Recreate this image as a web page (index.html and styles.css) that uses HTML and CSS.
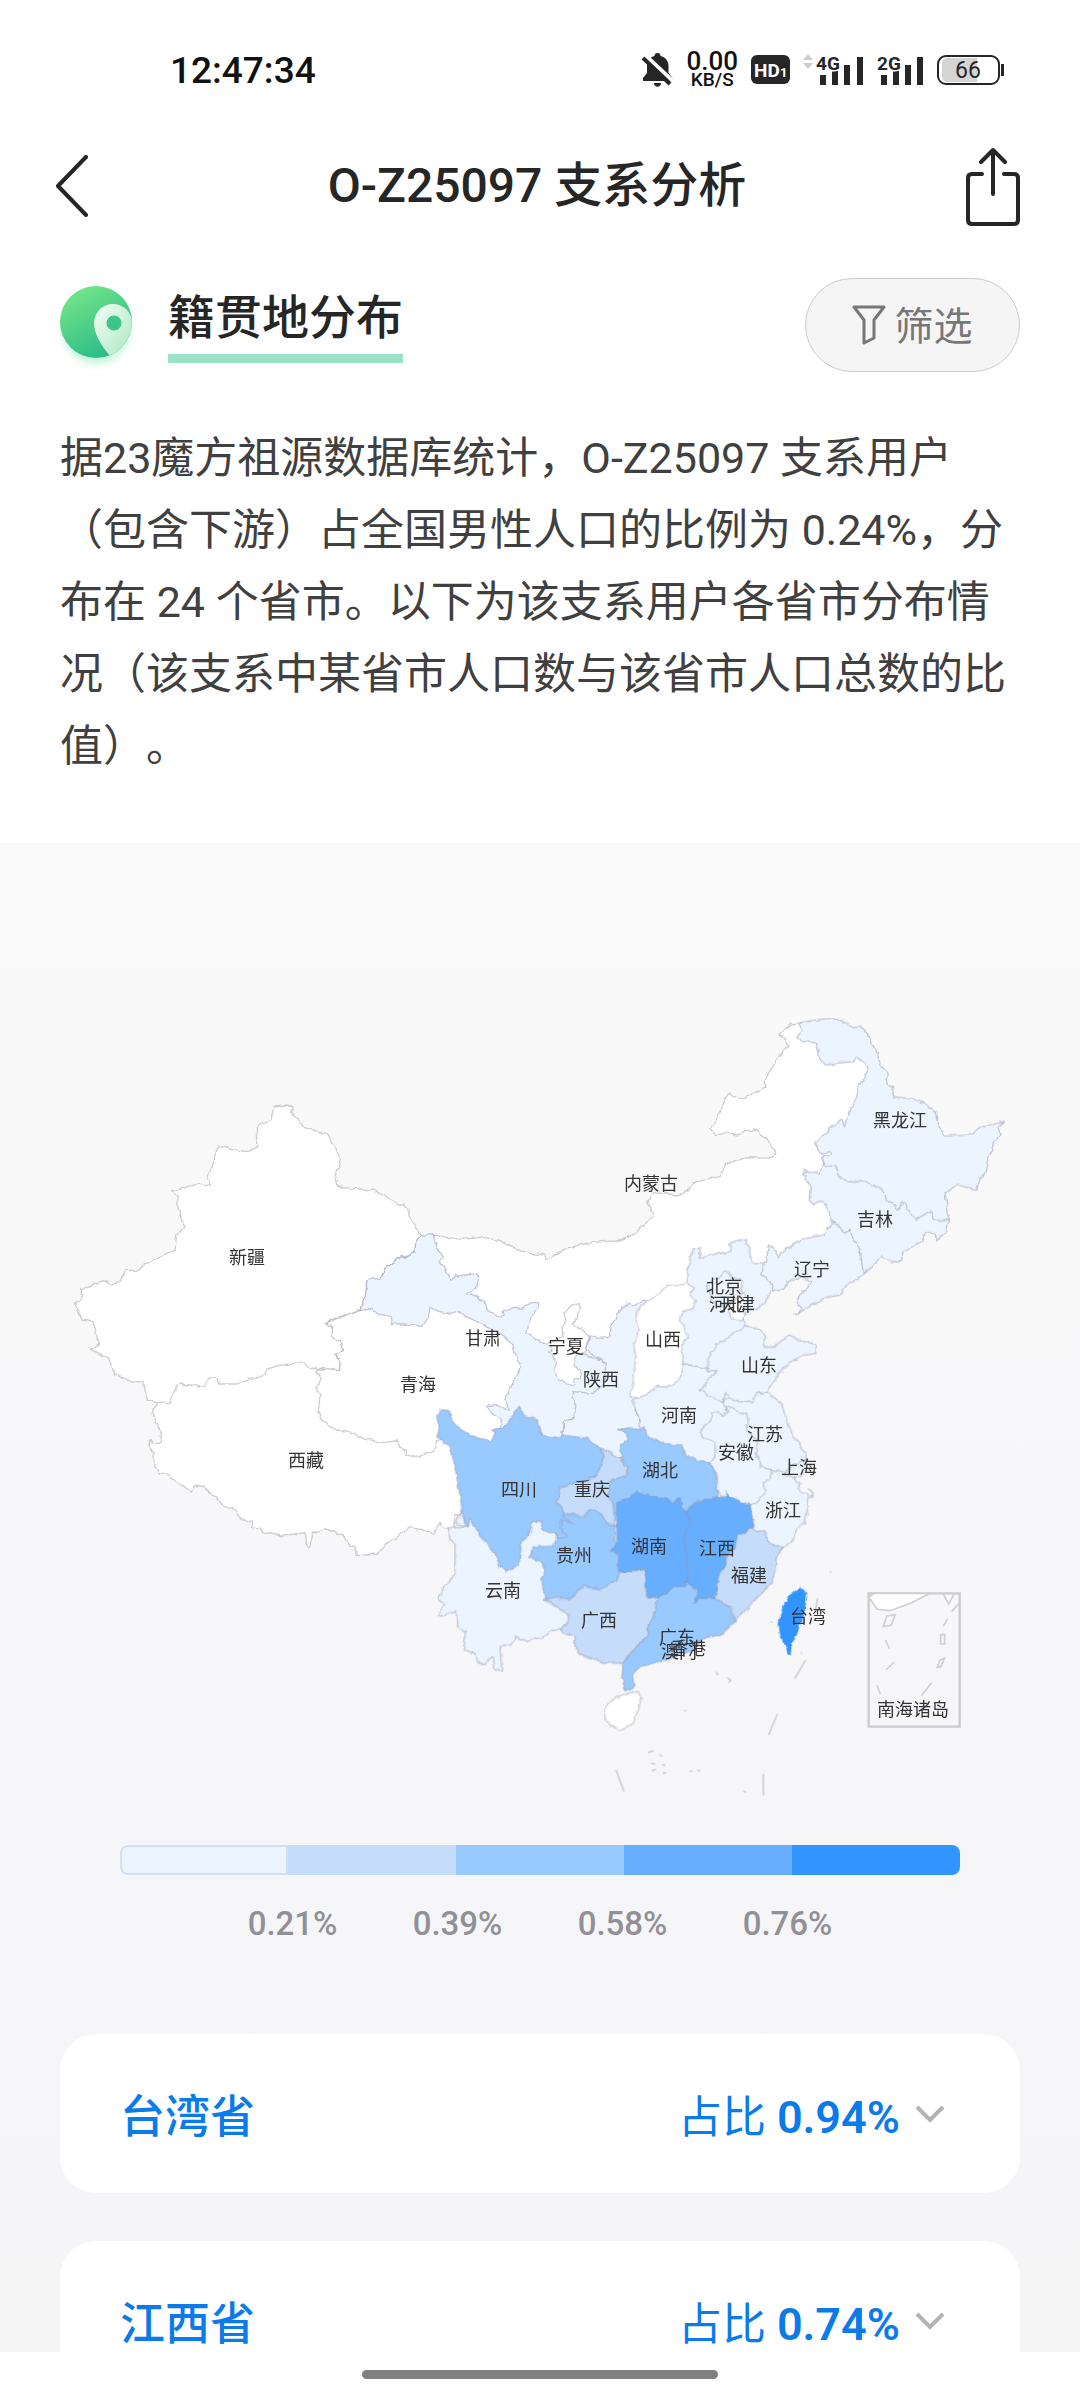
FILE: index.html
```html
<!DOCTYPE html>
<html lang="zh-CN">
<head>
<meta charset="utf-8">
<meta name="viewport" content="width=device-width, initial-scale=1">
<title>O-Z25097 支系分析</title>
<link rel="stylesheet" href="styles.css">
</head>
<body>
<div class="status">
  <time class="clock">12:47:34</time>
  <div class="status-icons">
    <svg class="bell" width="31" height="36" viewBox="0 0 31 36" aria-hidden="true">
      <path d="M15.500 1c2 0 3 1 3 3 5 1 8 5 8 10v7l4 5v3H1v-3l4-5v-7c0-5 3-9 7.500-10 0-2 1-3 3-3z"/><path d="M12 31h7c0 5-7 5-7 0z"/>
      <path class="bell-gap" d="M3 3l30 28"/><path class="bell-slash" d="M1 6l27 26"/>
    </svg>
    <div class="speed"><span class="rate">0.00</span><span class="unit">KB/S</span></div>
    <svg class="hd" width="39" height="30" viewBox="0 0 39 30"><rect width="39" height="29" rx="6"/><text x="3" y="22" class="hd-text">HD</text><text x="29" y="22" class="hd-sub">1</text></svg>
    <svg class="signal" width="61" height="34" viewBox="0 0 61 34"><path class="faint" d="M0 7l5-6 5 6zM0 10h10l-5 6z"/><path d="M17 22h6v10h-6zM29 18h6v14h-6zM41 12h6v20h-6zM54 4h6v28h-6z"/><text x="13" y="17" class="net">4G</text></svg>
    <svg class="signal" width="47" height="34" viewBox="0 0 47 34"><path d="M4 22h6v10H4zM16 18h6v14h-6zM28 12h6v20h-6zM40 4h6v28h-6z"/><text x="0" y="17" class="net">2G</text></svg>
    <svg class="battery" width="68" height="32" viewBox="0 0 68 32"><path class="level" d="M10 4h30v24H10a5 5 0 0 1-5-5V9a5 5 0 0 1 5-5z"/><rect class="shell" x="1" y="2" width="61" height="28" rx="8"/><path d="M64 10h3v12h-3z"/><text x="31" y="24" class="charge">66</text></svg>
  </div>
</div>
<header class="topbar">
  <button class="icon-btn" aria-label="返回"><svg width="36" height="62" viewBox="0 0 36 62"><path class="line" d="M32 2L4 31l28 29"/></svg></button>
  <h1>O-Z25097 支系分析</h1>
  <button class="icon-btn" aria-label="分享"><svg width="56" height="80" viewBox="0 0 56 80"><path class="line bold" d="M18 28H8q-4 0-4 4v42q0 4 4 4h42q4 0 4-4V32q0-4-4-4H40M29 48V5M17 16L29 4l12 12"/></svg></button>
</header>
<main>
  <section class="intro">
    <div class="section-head">
      <svg class="pin" width="84" height="90" viewBox="0 0 84 90" aria-hidden="true">
        <defs>
          <linearGradient id="green" x1="0.100" y1="0.100" x2="0.600" y2="1"><stop offset="0" stop-color="#74e588"/><stop offset="1" stop-color="#2abb88"/></linearGradient>
          <linearGradient id="pale" x1="0" y1="0" x2="1" y2="1"><stop offset="0" stop-color="#f4fcf5"/><stop offset="1" stop-color="#a9e8c0"/></linearGradient>
          <clipPath id="disc"><circle cx="42" cy="42" r="36"/></clipPath>
        </defs>
        <circle class="glow" cx="42" cy="51" r="32"/>
        <circle cx="42" cy="42" r="36" fill="url(#green)"/>
        <path clip-path="url(#disc)" fill="url(#pale)" d="M56 76C46 64 40 53 40 43a19 19 0 0 1 38 0c0 12-8 26-22 33z"/>
        <circle cx="60" cy="43" r="7.500" fill="#3cc489"/>
      </svg>
      <h2>籍贯地分布</h2>
      <button class="filter"><svg width="34" height="42" viewBox="0 0 34 42" aria-hidden="true"><path d="M2 3h30L22 16v18l-10 5V16z"/></svg><span>筛选</span></button>
    </div>
    <p>据23魔方祖源数据库统计，O-Z25097 支系用户（包含下游）占全国男性人口的比例为 0.24%，分布在 24 个省市。以下为该支系用户各省市分布情况（该支系中某省市人口数与该省市人口总数的比值）。</p>
  </section>
  <section class="panel">
    <svg class="map" viewBox="0 843 1080 972" role="img" aria-label="各省市分布地图">
      <defs>
        <filter id="coast" x="0" y="0" width="100%" height="100%" color-interpolation-filters="sRGB"><feTurbulence type="fractalNoise" baseFrequency="0.130" numOctaves="2" seed="4" result="n"/><feDisplacementMap in="SourceGraphic" in2="n" scale="5" xChannelSelector="R" yChannelSelector="G"/></filter>
      </defs>
      <g class="regions" filter="url(#coast)">
        <g transform="translate(300 1180) scale(.33333)">
          <path class="l0" d="M400 165L443 172 480 178 550 172 600 182 620 195 690 220 735 225 738 235 752 236 800 205 860 190 905 185 950 183 1000 165 1030 135 1065 108 1042 70 1055 38 1100 42 1145 45 1188 5 1260-10 1278-48 1340-70 1420-68 1428-85 1400-125 1365-150 1335-148 1312-132 1280-142 1248-133 1230-155 1245-172 1285-262 1330-243 1398-280 1395-300 1430-365 1465-400 1460-425 1433-432 1470-468 1508-472 1550-460 1600-380 1680-440 1720-330 1660-200 1600-80 1640 20 1620 160 1560 220 1420 310 1260 300 1150 420 1000 440 900 500 800 520 700 520 600 430 430 330 400 200z"/>
        </g>
        <g transform="translate(60 1080) scale(.33333)">
          <path class="l0" d="M295 970L278 990 285 1025 305 1060 300 1090 285 1090 268 1080 268 1100 282 1120 283 1150 298 1178 330 1185 340 1200 365 1212 392 1238 405 1215 430 1220 500 1285 520 1283 535 1308 565 1325 575 1322 578 1340 600 1345 612 1362 630 1355 670 1368 735 1355 742 1400 748 1405 760 1360 790 1345 850 1365 865 1395 885 1400 890 1427 950 1422 985 1390 1050 1343 1085 1348 1120 1365 1138 1330 1160 1345 1180 1345 1185 1305 1205 1300 1230 1250 1240 1150 1170 1060 1000 1000 850 900 700 820 500 850 350 900z"/>
        </g>
        <g transform="translate(300 1180) scale(.33333)">
          <path class="l0" d="M180 388L80 428 85 435 98 440 95 470 125 490 130 512 105 520 120 545 118 572 50 570 48 580 60 590 50 630 60 650 55 690 70 725 110 750 140 753 175 770 245 788 290 783 300 800 318 808 320 825 345 832 370 825 400 815 408 785 450 760 520 800 580 790 640 740 650 660 680 560 660 490 600 430 480 370 420 350 300 400 250 370z"/>
        </g>
        <g transform="translate(60 1080) scale(.33333)">
          <path class="l0" d="M645 80L695 78 700 85 692 98 735 140 765 152 800 160 818 190 842 235 835 265 825 290 830 315 870 325 940 330 970 345 1015 375 1035 375 1060 430 1082 465 1068 480 1065 515 1035 535 1025 530 975 565 963 595 925 600 915 650 900 688 825 715 798 728 815 740 818 770 845 790 850 810 825 825 840 845 838 872 790 862 770 868 720 848 650 858 620 868 605 890 570 895 530 912 480 912 465 895 450 893 430 918 390 915 355 912 345 930 330 968 295 970 262 960 250 908 200 900 160 880 155 845 130 825 88 808 118 795 100 725 65 720 55 690 43 672 62 660 65 630 105 610 138 600 148 613 180 608 195 572 240 570 255 552 345 508 350 465 365 450 373 440 355 390 353 350 335 335 420 310 455 320 440 295 475 198 520 210 565 215 593 200 592 135 635 118z"/>
        </g>
        <g transform="translate(300 1180) scale(.33333)">
          <path class="l1" d="M362 165L400 165 410 200 428 235 418 245 440 270 450 298 470 288 500 285 530 280 537 295 530 320 515 335 500 340 530 352 560 372 565 390 600 412 612 405 608 392 640 382 665 385 690 368 712 368 715 385 690 415 685 435 680 460 700 470 720 487 800 500 920 550 920 620 880 660 840 700 820 715 790 730 785 765 770 790 730 790 720 740 700 740 640 720 610 745 600 745 605 720 575 700 562 678 600 680 625 690 615 655 635 620 650 590 662 560 645 520 640 500 615 470 570 445 530 425 500 410 475 392 450 400 415 395 390 382 385 410 368 440 340 435 300 432 275 430 270 410 230 400 215 385 180 388 195 350 205 298 243 295 255 265 305 230 315 235 345 215 348 180z"/>
          <path class="l1" d="M1035 360L1000 375 985 370 965 385 930 440 925 472 895 475 870 465 855 510 915 548 918 600 880 640 820 635 815 650 828 675 820 718 790 722 790 790 900 850 1000 820 1040 760 1025 735 1005 690 1060 600 1080 450z"/>
          <path class="l0" d="M815 375L835 372 838 390 822 435 870 465 860 490 855 515 825 530 822 560 842 570 838 595 822 600 820 620 790 605 770 595 765 570 770 560 762 525 750 520 755 500 735 490 790 470 785 440 795 430 793 400z"/>
        </g>
        <g transform="translate(600 1220) scale(.33333)">
          <path class="l0" d="M280 180L265 185 235 200 200 195 170 230 145 240 120 260 105 300 118 330 100 370 108 410 100 480 90 530 150 540 280 480 300 350z"/>
          <path class="l1" d="M280 85L300 85 300 115 330 105 390 95 390 70 415 60 435 58 445 80 455 130 495 132 540 160 520 210 505 225 500 245 470 265 430 285 435 315 430 360 360 460 250 432 242 380 265 350 240 300 250 275 280 265 285 240 270 220 280 205 262 190 260 150 270 125z"/>
          <path class="l1" d="M320 190L360 170 378 150 395 170 430 185 420 210 430 235 385 250 360 260 335 240z"/>
          <path class="l0" d="M430 220L445 240 425 260 435 285 425 300 395 296 385 270 400 245z"/>
          <path class="l1" d="M247 432L320 445 400 450 430 560 420 700 340 760 290 760 180 700 120 640 120 600 110 575 95 540 150 520 170 500 200 500 240 480z"/>
          <path class="l1" d="M365 543L400 530 455 520 500 515 545 550 560 600 580 650 605 680 620 705 615 725 600 750 550 775 515 750 440 740 400 650 400 600z"/>
          <path class="l1" d="M435 320L480 328 500 350 490 375 520 385 545 360 570 345 610 365 650 372 648 400 615 405 580 420 545 450 515 490 500 515 470 520 455 548 430 545 400 540 380 520 365 543 330 530 300 512 325 480 355 450 325 455 320 435 330 400 355 370 390 350z"/>
        </g>
        <g transform="translate(620 1000) scale(.33333)">
          <path class="l1" d="M445 735L460 745 475 770 500 745 560 715 610 705 640 668 680 680 740 760 740 815 700 845 675 860 660 885 610 895 560 925 522 945 545 925 530 905 540 885 575 845 545 830 510 840 490 865 460 872 450 845 425 825 430 800 440 785z"/>
          <path class="l1" d="M548 520L555 512 600 520 610 480 700 500 850 560 960 640 985 662 980 695 950 720 945 705 920 695 905 725 850 755 840 785 815 785 785 768 765 790 730 822 720 745 700 720 690 690 672 700 655 675 635 668 625 630 612 603 580 615 568 600 570 560 555 525z"/>
          <path class="l1" d="M548 68L575 62 630 55 665 62 700 80 720 78 745 100 755 130 772 160 785 200 800 215 805 255 818 262 820 290 860 295 900 300 950 340 958 380 975 408 1050 405 1075 385 1155 363 1135 380 1140 405 1120 430 1115 455 1105 475 1095 520 1080 540 1070 568 1010 555 975 580 985 640 980 662 945 660 935 635 920 640 885 660 870 640 850 605 835 628 820 610 800 600 785 565 735 545 685 545 655 530 650 500 610 495 608 470 635 465 632 455 605 462 583 430 600 410 665 360 673 380 690 325 705 315 710 270 730 235 745 210 735 190 710 170 700 185 620 192 605 185 590 135 565 120 550 130 530 112 548 90 540 70z"/>
        </g>
        <g transform="translate(400 1380) scale(.33333)">
          <path class="l1" d="M1115 270L1150 275 1180 290 1200 310 1195 330 1220 340 1225 380 1215 430 1190 445 1185 470 1160 500 1110 520 1070 470 1040 400 1050 350 1090 300z"/>
          <path class="l1" d="M1150 285L1180 255 1215 240 1225 265 1200 288 1180 292z"/>
          <path class="l1" d="M980 75L1015 95 1040 100 1045 130 1040 150 1060 170 1075 190 1065 220 1080 240 1078 260 1115 270 1110 295 1090 310 1095 340 1070 365 1040 380 980 370 945 320 950 280 925 250 945 230 945 190 915 175 902 152 930 125 935 100 955 95 970 110 982 95z"/>
          <path class="l1" d="M205 440L145 440 150 480 165 490 165 580 150 600 130 625 115 655 130 675 115 710 170 695 170 740 200 755 190 810 225 820 235 850 260 850 280 830 285 870 305 870 300 800 335 790 350 770 380 785 430 770 450 755 480 745 530 725 530 650 470 600 450 510 490 490 465 440 430 435 420 425 400 422 370 450 260 430 210 415 192 430 180 400 165 430z"/>
          <path class="l3" d="M655 145L720 148 735 140 740 165 780 190 845 195 855 225 890 240 925 250 945 275 955 340 930 380 850 420 650 420 600 380 600 325 620 310 650 270 665 235 658 195 685 180 680 165z"/>
          <path class="l2" d="M605 205L625 215 660 235 685 265 680 285 630 305 632 325 625 350 640 375 645 440 630 440 560 420 510 415 470 400 460 330 550 260z"/>
          <path class="l3" d="M575 390L600 400 615 425 645 440 645 480 660 510 670 570 660 620 570 650 500 680 435 660 430 630 425 600 435 570 420 545 390 530 400 500 460 498 470 475 450 430 490 400 535 405 550 410z"/>
          <path class="l3" d="M125 85L150 95 155 120 180 145 215 170 275 182 285 160 275 150 300 145 325 130 340 100 355 82 370 105 410 120 425 165 470 172 485 165 560 175 600 205 615 230 590 285 560 300 480 320 468 365 485 380 490 410 520 430 485 420 480 445 500 460 500 470 470 475 465 460 430 455 420 425 400 422 385 465 360 495 358 555 315 575 300 560 285 520 240 465 210 415 205 440 192 430 180 350 165 260 150 200 110 170 120 140 108 115z"/>
          <path class="l2" d="M725 560L780 580 790 640 765 700 745 740 740 775 710 800 690 820 665 855 640 848 610 850 590 840 540 825 525 800 525 770 480 750 505 725 505 700 475 685 435 660 460 650 505 660 550 615 600 630 650 600 660 575 700 575z"/>
          <path class="l3" d="M780 600L840 590 920 600 940 650 970 660 990 680 1003 725 960 765 910 775 880 810 800 840 720 860 700 885 705 915 695 930 675 928 665 890 670 850 710 800 745 765 745 735 765 700z"/>
          <path class="l2" d="M1065 450L1095 455 1105 490 1150 500 1130 530 1125 570 1115 610 1060 665 1005 725 995 680 930 650 940 560 960 500 1000 440z"/>
          <path class="l4" d="M865 385L905 360 980 345 975 335 990 350 1050 375 1062 440 1030 460 1010 470 1005 505 975 530 975 560 955 590 945 655 900 655 880 665 895 640 880 620 840 600 820 480z"/>
          <path class="l4" d="M650 365L695 350 710 335 750 345 800 355 820 365 840 350 845 385 860 390 870 430 850 470 862 530 862 600 855 620 820 620 800 640 770 650 745 655 735 620 735 565 690 575 655 575 655 520 630 515 650 490z"/>
          <path class="l0" d="M680 940L715 935 725 955 700 1030 660 1052 615 1020 615 980 650 950z"/>
          <path class="l5" d="M1200 622L1220 640 1215 680 1190 760 1172 800 1170 825 1163 820 1160 795 1140 770 1135 730 1150 680 1175 640z"/>
        </g>
      </g>
      <path class="isles" transform="translate(400 1380) scale(.33333)" d="M1217 840L1184 895M1132 1002L1106 1065M1090 1182V1246M648 1170L672 1234M948 875l6 10M982 893l10 8-6 6M853 990l5 4M745 1118l16-6M780 1124l6 6M752 1150l14 2M786 1154l10 2M756 1172l12-4M788 1180l10-2M870 1174l8-1M892 1172l8-1M1030 1232l8 6M1112 724l4 4M1203 817l3 3M1225 325l15 15-8 15M1230 345l12 6M795 842l8-3M1290 575l3 3M1253 654l-6 35"/>
      <g class="inset" transform="translate(780 1540) scale(.33333)">
        <path class="inset-frame" d="M266 160H539V560H266z"/>
        <path class="l0" d="M266 172L282 160H450L395 188 330 212 292 208zM490 162H522L506 192z"/>
        <path d="M320 228L346 224 333 256 310 260zM537 190L515 215M503 236L490 258M482 284H494V312H482zM493 354L483 380 472 382 480 360zM316 300L328 326M343 366L317 390M291 436L301 462M455 428L424 467"/>
      </g>
      <g class="labels">
        <text x="247" y="1257">新疆</text><text x="306" y="1460">西藏</text><text x="418" y="1384">青海</text><text x="483" y="1338">甘肃</text>
        <text x="566" y="1346">宁夏</text><text x="601" y="1379">陕西</text><text x="519" y="1489">四川</text><text x="592" y="1489">重庆</text>
        <text x="574" y="1555">贵州</text><text x="651" y="1183">内蒙古</text><text x="900" y="1120">黑龙江</text><text x="875" y="1219">吉林</text>
        <text x="812" y="1269">辽宁</text><text x="724" y="1286">北京</text><text x="727" y="1304">河北</text><text x="737" y="1304">天津</text>
        <text x="663" y="1339">山西</text><text x="759" y="1365">山东</text><text x="679" y="1415">河南</text><text x="765" y="1434">江苏</text>
        <text x="736" y="1452">安徽</text><text x="799" y="1467">上海</text><text x="783" y="1510">浙江</text><text x="660" y="1470">湖北</text>
        <text x="649" y="1546">湖南</text><text x="717" y="1548">江西</text><text x="749" y="1575">福建</text><text x="503" y="1590">云南</text>
        <text x="599" y="1620">广西</text><text x="677" y="1637">广东</text><text x="688" y="1648">香港</text><text x="679" y="1651">澳门</text>
        <text x="808" y="1616">台湾</text><text x="913" y="1709">南海诸岛</text>
      </g>
    </svg>
    <div class="legend">
      <div class="scale"><i class="b1"></i><i class="b2"></i><i class="b3"></i><i class="b4"></i><i class="b5"></i></div>
      <div class="ticks"><span>0.21%</span><span>0.39%</span><span>0.58%</span><span>0.76%</span></div>
    </div>
    <div class="cards">
      <button class="card"><span class="name">台湾省</span><span class="share">占比 <b>0.94%</b></span><svg width="30" height="20" viewBox="0 0 30 20" aria-hidden="true"><path d="M2 3l13 13L28 3"/></svg></button>
      <button class="card"><span class="name">江西省</span><span class="share">占比 <b>0.74%</b></span><svg width="30" height="20" viewBox="0 0 30 20" aria-hidden="true"><path d="M2 3l13 13L28 3"/></svg></button>
    </div>
  </section>
</main>
<footer class="gesture"><div class="handle"></div></footer>
</body>
</html>
```
FILE: styles.css
```css
* { box-sizing: border-box; }
body {
  margin: 0;
  height: 100vh;
  display: flex;
  flex-direction: column;
  background: #fff;
  color: #262626;
  font-family: Roboto, "Noto Sans CJK SC", sans-serif;
}
button { font: inherit; color: inherit; border: 0; background: none; padding: 0; cursor: pointer; }
svg { display: block; }

.status {
  flex: none;
  height: 140px;
  padding: 0 75px 0 170px;
  display: flex;
  align-items: center;
  justify-content: space-between;
}
.clock { font-size: 37px; font-weight: 500; color: #111; }
.status-icons { display: flex; align-items: center; gap: 13px; fill: #262626; }
.bell-gap { stroke: #fff; stroke-width: 4; }
.bell-slash { stroke: #262626; stroke-width: 4; }
.speed { display: flex; flex-direction: column; align-items: center; font-weight: 500; color: #111; }
.rate { font-size: 26px; line-height: 20px; }
.unit { font-size: 19px; line-height: 18px; }
.hd-text { fill: #fff; font-size: 19px; font-weight: 700; }
.hd-sub { fill: #fff; font-size: 13px; font-weight: 700; }
.net { font-size: 19px; font-weight: 700; stroke: #fff; stroke-width: 3; paint-order: stroke; }
.faint { fill: #ccc; }
.level { fill: #d4d4d4; }
.shell { fill: none; stroke: #262626; stroke-width: 2; }
.charge { font-size: 23px; text-anchor: middle; }

.topbar {
  flex: none;
  height: 92px;
  padding: 0 60px 0 54px;
  display: grid;
  grid-template-columns: 60px 1fr 60px;
  align-items: center;
}
.topbar h1 { margin: 0; font-size: 48px; line-height: 64px; font-weight: 500; text-align: center; }
.icon-btn:last-child { justify-self: end; }
.line { fill: none; stroke: #262626; stroke-width: 4; stroke-linecap: round; stroke-linejoin: round; }

main { flex: 1; min-height: 0; overflow: hidden; display: flex; flex-direction: column; }
.intro { flex: none; padding: 46px 60px 61px; }
.section-head { display: flex; align-items: center; height: 94px; margin-bottom: 50px; }
.pin { margin: 0 30px 0 -6px; }
.glow { fill: #b9f0d8; filter: blur(5px); }
.section-head h2 {
  margin: 0 auto 0 0;
  padding-bottom: 6px;
  font-size: 47px;
  line-height: 60px;
  font-weight: 500;
  border-bottom: 9px solid #9ae2c5;
}
.filter {
  display: flex;
  align-items: center;
  justify-content: center;
  gap: 8px;
  width: 215px;
  height: 94px;
  border: 1px solid #ccc;
  border-radius: 47px;
  background: #f5f5f5;
  color: #777;
  font-size: 39px;
}
.filter span { padding-bottom: 5px; }
.filter path { fill: none; stroke: #777; stroke-width: 3; stroke-linejoin: round; }
.intro p {
  margin: 0;
  font-size: 43px;
  line-height: 72px;
  color: #404040;
  text-spacing-trim: space-all;
}

.panel { flex: none; background: linear-gradient(#fafafa, #f6f6f9 60%, #f5f5f6); }
.map { width: 100%; }
.regions path { stroke: #9494ac; stroke-opacity: .5; stroke-width: 4; stroke-linejoin: round; }
.l0 { fill: #fff; }
.l1 { fill: #ecf5ff; }
.l2 { fill: #c5dcfa; }
.l3 { fill: #98caff; }
.l4 { fill: #67aeff; }
.regions .l0 { stroke: #a0a0a8; }
.regions .l5 { fill: #3295ff; stroke: #3295ff; stroke-opacity: 1; }
.isles { fill: none; stroke: #c4c4cc; stroke-width: 4; }
.inset path { stroke: #cfcfd6; stroke-width: 5; }
.inset .inset-frame { stroke: #cacad2; stroke-width: 7; }
.inset path:not(.l0) { fill: none; }
.labels text { font-size: 18px; fill: #333; text-anchor: middle; dominant-baseline: central; }

.legend { padding: 30px 120px 0; }
.scale { display: flex; height: 30px; border-radius: 8px; overflow: hidden; }
.scale i { flex: 1; }
.b1 { background: #ecf5ff; box-shadow: inset 0 0 0 2px #cfe0f4; border-radius: 8px 0 0 8px; }
.b2 { background: #c5dcfa; }
.b3 { background: #98caff; }
.b4 { background: #67aeff; }
.b5 { background: #3295ff; }
.ticks { display: flex; justify-content: center; margin-top: 29px; padding: 0 90px; font-size: 33px; line-height: 40px; font-weight: 500; color: #909096; }
.ticks span { flex: 1; text-align: center; }

.cards { padding: 90px 60px 48px; display: flex; flex-direction: column; gap: 48px; }
.card {
  display: flex;
  align-items: center;
  height: 159px;
  padding: 0 75px 0 60px;
  border-radius: 36px;
  background: #fff;
  color: #0b7bea;
  font-size: 45px;
}
.name { font-weight: 500; margin-right: auto; }
.share { font-size: 44px; }
.share b { font-size: 45px; font-weight: 600; }
.card svg { margin-left: 15px; }
.card path { fill: none; stroke: #b3b3b3; stroke-width: 4; }

.gesture { flex: none; height: 48px; padding-bottom: 4px; display: flex; align-items: center; justify-content: center; background: #fff; }
.handle { width: 33%; height: 9px; border-radius: 5px; background: #808080; }
```
